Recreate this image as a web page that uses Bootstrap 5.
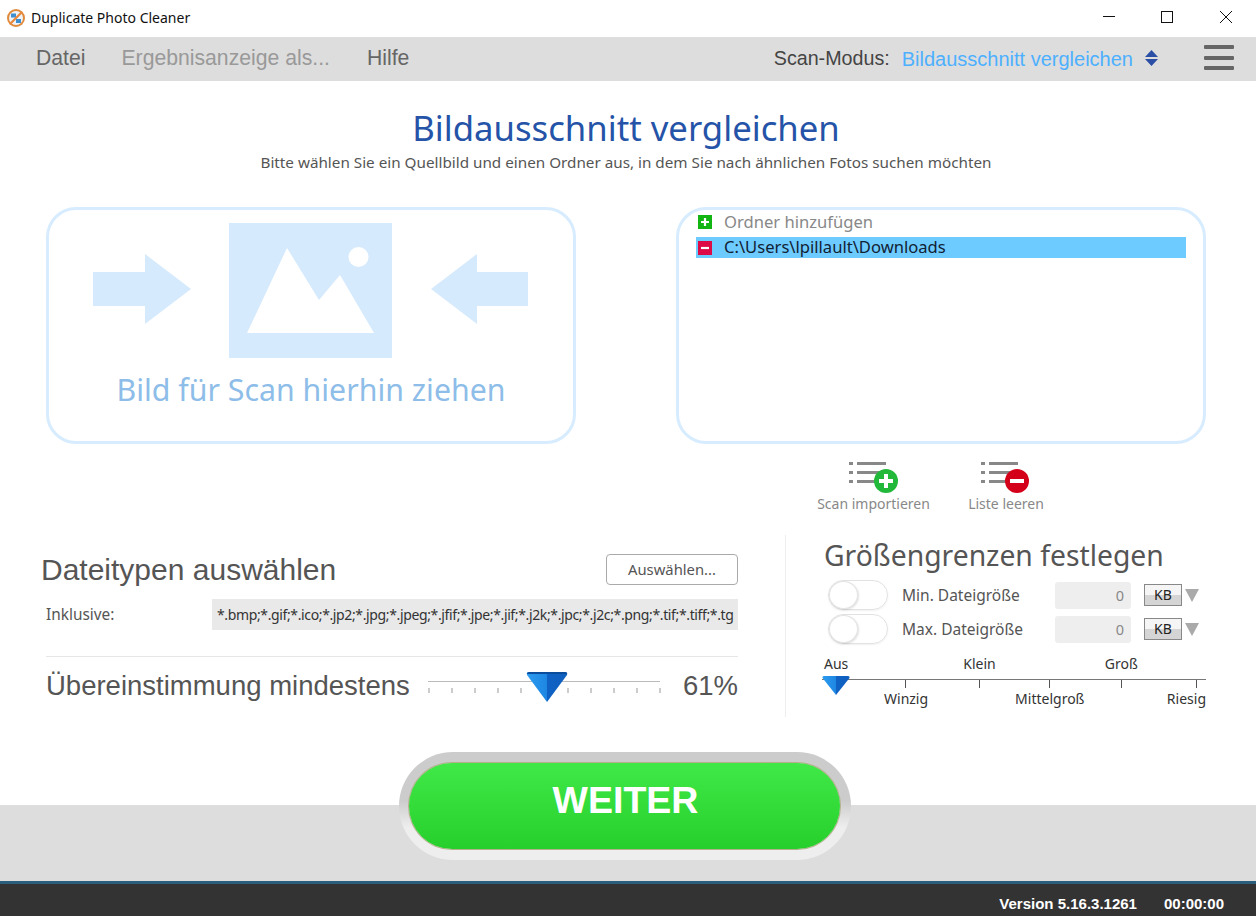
<!DOCTYPE html>
<html lang="de">
<head>
<meta charset="utf-8">
<title>Duplicate Photo Cleaner</title>
<link rel="stylesheet" href="https://cdn.jsdelivr.net/npm/bootstrap@5.3.0/dist/css/bootstrap.min.css">
<style>
html,body{height:100%;overflow:hidden}
body{width:1256px;height:916px;font-family:"Noto Sans","Open Sans",sans-serif;background:#fff;color:#555}
.arial{font-family:"Liberation Sans",Arial,sans-serif}
.titlebar{height:37px;font-size:14px;color:#111;padding-left:7px;padding-bottom:2px}
.titlebar .ttl{margin-left:6px;font-family:"Noto Sans",sans-serif;font-size:14px}
.winbtns{width:153px;height:37px;margin-top:2px}
.menubar{height:44px;background:#ddd;padding:0 22px 3px 36px;font-size:21.2px}
.mi{color:#666;margin-right:36px}
.mi-off{color:#999;margin-right:37px}
.scan-lbl{color:#444;font-size:19.7px;margin-right:12px;margin-top:3px}
.scan-val{color:#4db0ff;font-size:20px;margin-right:12px;margin-top:3px}
.burger{width:30px;margin-left:46px}
.burger i{display:block;height:4px;background:#666;border-radius:1px;margin:6.5px 0}
.heading{height:126px;padding:26px 4px 0 0;text-align:center}
.heading h1{font-size:34.700px;font-weight:400;color:#2453a8;margin:0;line-height:42px;font-family:"Noto Sans",sans-serif}
.heading p{font-size:15.250px;margin:3px 0 0;color:#555;line-height:20px}
.panels{padding:0 50px 0 46px}
.panel{width:530px;height:237px;border:3.5px solid #d8ecff;border-radius:30px}
.drop{padding-top:13px}
.drop-text{font-size:30.300px;color:#8dbde8;line-height:40px;margin-top:12px}
.list{padding:2px 17px 0 17px;font-size:16.600px;line-height:21px}
.list-add{color:#888;padding:0 0 2px 2px;margin-bottom:4px;height:21px}
.list-sel{background:#6dcbff;color:#123;padding:0 0 2px 2px;height:21px}
.sq{width:14px;height:14px;margin-right:12px;flex:none}
.list-sel .sq{margin-top:2px}
.actions{height:91px;padding:18px 0 0 817px;font-size:14px;color:#888}
.act{line-height:20px;text-align:center}
.act svg{display:block;margin:0 auto}
.act-a{width:113px;margin-right:38px}
.act-b{width:76px}
.lower{height:182px}
.lpane{width:785px;padding:0 47px 0 46px}
.rpane{width:471px;border-left:1px solid #eee;padding:0 50px 0 38px}
.l-title{font-size:30px;color:#555;line-height:36px;margin-left:-5px}
.l-head{height:64px;padding-top:17px}
.pick{width:132px;height:31px;border:1px solid #aaa;border-radius:4px;background:#fff;font-size:14.800px;color:#555;padding:0;margin-top:2px}
.incl{font-size:15.400px;color:#555;height:31px}
.incl-field{width:526px;height:31px;background:#e9e9e9;font-size:14px;color:#333;padding-left:5px;white-space:nowrap;line-height:31px;letter-spacing:-.37px}
.l-rule{border:0;border-top:1px solid #e6e6e6;opacity:1;margin:26px 0 0}
.match{height:58px;font-size:27.500px;color:#555}
.match-val{margin-left:auto}
.match svg{margin:2px 0 0 18px}
.r-title{font-size:28.300px;font-weight:400;color:#555;line-height:36px;margin:2px 0 5px;font-family:"Noto Sans",sans-serif}
.sz{height:34px;font-size:15.500px}
.tog{width:60px;height:30px;border:1px solid #e2e2e2;border-radius:15px;margin:0 14px 0 4px;flex:none;box-shadow:0 1px 2px rgba(0,0,0,.06)}
.tog i{display:block;width:29px;height:28px;border-radius:50%;background:#fff;border:1px solid #e4e4e4;box-shadow:1px 1px 2px rgba(0,0,0,.12)}
.sz-lbl{width:153px;color:#555;margin-top:2px}
.sz-in{width:76px;height:27px;background:#eee;border-radius:3px;text-align:right;padding-right:7px;line-height:27px;color:#888;font-size:14.500px;margin-right:13px}
.kb{width:38px;height:22px;border:1px solid #888;background:linear-gradient(#f5f5f5 50%,#d5d5d5 50%);text-align:center;line-height:20px;font-size:14px;color:#222}
.tri{width:0;height:0;border-left:7.5px solid transparent;border-right:7.5px solid transparent;border-top:13px solid #aaa;margin-left:3px}
.scale{font-size:14px;color:#333;line-height:18px;margin-top:9px;margin-left:-2px;width:384px}
.scale svg{display:block;margin-top:3px}
.t-row{padding-left:2px}
.t-klein{margin-left:115px}
.t-gross{margin-left:109px}
.b-row{padding-left:62px;margin-top:-6px}
.b-mittel{margin-left:87px}
.b-riesig{margin-left:auto}
.band{height:76px;background:#ddd;margin-top:88px;display:flex;justify-content:center;padding-right:6px}
.go-ring{width:452px;height:108px;margin-top:-53px;border-radius:54px;background:linear-gradient(#ccc 0%,#ccc 45%,#eee 70%,#eee 100%);padding:11px 11px 11px 10px;flex:none}
.go{display:block;width:100%;height:86px;border:0;border-radius:44px;background:linear-gradient(#40e947,#26cf2b);box-shadow:0 0 0 1px #b5b08c;color:#fff;font-weight:700;font-size:37.500px;line-height:1;padding:0 0 10px 2px}
.status{height:35px;background:#333;border-top:3px solid #2b5d7c;color:#fff;font-size:15px;font-weight:700;padding:9px 32px 0 0}
.status span+span{margin-left:27px}
</style>
</head>
<body>
<div class="titlebar d-flex align-items-center">
  <svg width="18" height="18" viewBox="0 0 18 18"><circle cx="9" cy="9" r="9" fill="#e08a3c"/><circle cx="9" cy="9" r="7" fill="#eef4fa"/><path d="M4 4.500h5v4H4z" fill="#3d8fd0"/><path d="M9 10h5v4H9z" fill="#3d8fd0"/><path d="M3 15 15 3" stroke="#e8873a" stroke-width="2.200"/></svg>
  <span class="ttl">Duplicate Photo Cleaner</span>
  <div class="winbtns ms-auto">
    <svg width="153" height="37" viewBox="1 0 153 37"><path d="M1 16.500h12" stroke="#111"/><rect x="59.500" y="11.500" width="11" height="11" fill="none" stroke="#111"/><path d="M118 11l12 12M130 11l-12 12" stroke="#111"/></svg>
  </div>
</div>
<nav class="menubar d-flex align-items-center arial">
  <span class="mi">Datei</span><span class="mi mi-off">Ergebnisanzeige als...</span><span class="mi">Hilfe</span>
  <span class="scan-lbl ms-auto">Scan-Modus:</span><span class="scan-val">Bildausschnitt vergleichen</span>
  <svg width="13" height="18" viewBox="0 0 13 18"><path d="M6.500 1 13 8H0zM0 10h13l-6.500 7z" fill="#2a4fa5"/></svg>
  <div class="burger"><i></i><i></i><i></i></div>
</nav>
<main>
  <header class="heading">
    <h1>Bildausschnitt vergleichen</h1>
    <p>Bitte wählen Sie ein Quellbild und einen Ordner aus, in dem Sie nach ähnlichen Fotos suchen möchten</p>
  </header>
  <section class="panels d-flex justify-content-between">
    <div class="panel drop text-center">
      <svg width="437" height="135" viewBox="1 0 437 135" class="d-block mx-auto">
        <path d="M1 49h52V31l46 35-46 35V83H1z" fill="#d6eafd"/>
        <rect x="137" y="0" width="163" height="135" fill="#d6eafd"/>
        <path d="M155 110 195 25l32 52 21-25 34 58z" fill="#fff"/>
        <circle cx="266.500" cy="34" r="10" fill="#fff"/>
        <path d="M436 49h-51V31l-46 35 46 35V83h51z" fill="#d6eafd"/>
      </svg>
      <div class="drop-text">Bild für Scan hierhin ziehen</div>
    </div>
    <div class="panel list">
      <div class="list-add d-flex align-items-center">
        <svg class="sq" viewBox="0 0 14 14"><rect width="14" height="14" fill="#12b512"/><path d="M3 7h8M7 3v8" stroke="#fff" stroke-width="2.200"/></svg>Ordner hinzufügen
      </div>
      <div class="list-sel d-flex align-items-center">
        <svg class="sq" viewBox="0 0 14 14"><rect width="14" height="14" fill="#dc0a46"/><path d="M3 7h8" stroke="#fff" stroke-width="2.200"/></svg>C:\Users\lpillault\Downloads
      </div>
    </div>
  </section>
  <section class="actions d-flex align-items-start">
    <div class="act act-a">
      <svg width="50" height="32" viewBox="0 0 50 32">
        <g fill="#888"><rect x="0" y="0" width="4" height="3"/><rect x="8" y="0" width="29" height="3"/><rect x="0" y="9" width="4" height="3"/><rect x="8" y="9" width="29" height="3"/><rect x="0" y="18" width="4" height="3"/><rect x="8" y="18" width="20" height="3"/></g>
        <circle cx="37" cy="19" r="12" fill="#22b83a"/><path d="M30 19h14M37 12v14" stroke="#fff" stroke-width="4"/>
      </svg>
      Scan importieren
    </div>
    <div class="act act-b">
      <svg width="50" height="32" viewBox="0 0 50 32">
        <g fill="#888"><rect x="0" y="0" width="4" height="3"/><rect x="8" y="0" width="29" height="3"/><rect x="0" y="9" width="4" height="3"/><rect x="8" y="9" width="29" height="3"/><rect x="0" y="18" width="4" height="3"/><rect x="8" y="18" width="20" height="3"/></g>
        <circle cx="36" cy="19" r="12" fill="#d4001a"/><path d="M29 19h14" stroke="#fff" stroke-width="4"/>
      </svg>
      Liste leeren
    </div>
  </section>
  <section class="lower d-flex">
    <div class="lpane">
      <div class="l-head d-flex justify-content-between align-items-start">
        <div class="l-title arial">Dateitypen auswählen</div>
        <button type="button" class="pick">Auswählen...</button>
      </div>
      <div class="incl d-flex align-items-center justify-content-between">
        <span>Inklusive:</span>
        <div class="incl-field">*.bmp;*.gif;*.ico;*.jp2;*.jpg;*.jpeg;*.jfif;*.jpe;*.jif;*.j2k;*.jpc;*.j2c;*.png;*.tif;*.tiff;*.tg</div>
      </div>
      <hr class="l-rule">
      <div class="match d-flex align-items-center arial">
        <span>Übereinstimmung mindestens</span>
        <svg width="233" height="32" viewBox="0 0 233 32">
          <defs><linearGradient id="th" x1="0" x2="1" y1="0" y2="0"><stop offset="0" stop-color="#2b9cf0"/><stop offset=".5" stop-color="#1e86e2"/><stop offset=".5" stop-color="#0f62c4"/><stop offset="1" stop-color="#0f5fbe"/></linearGradient></defs>
          <path d="M0 10.500h232" stroke="#bbb" stroke-width="1"/>
          <path d="M1 17v5M24 17v5M47 17v5M70 17v5M93 17v5M140 17v5M163 17v5M186 17v5M209 17v5M232 17v5" stroke="#999"/>
          <path d="M101 1h36q3 0 2 3l-20 27-20-27q-1-3 2-3z" fill="url(#th)"/><path d="M101 1h36q2 0 2 2H99q0-2 2-2z" fill="#0a4d9c"/>
        </svg>
        <span class="match-val">61%</span>
      </div>
    </div>
    <div class="rpane">
      <h2 class="r-title">Größengrenzen festlegen</h2>
      <div class="sz d-flex align-items-center">
        <div class="tog"><i></i></div><span class="sz-lbl">Min. Dateigröße</span><div class="sz-in">0</div><div class="kb">KB</div><div class="tri"></div>
      </div>
      <div class="sz d-flex align-items-center">
        <div class="tog"><i></i></div><span class="sz-lbl">Max. Dateigröße</span><div class="sz-in">0</div><div class="kb">KB</div><div class="tri"></div>
      </div>
      <div class="scale">
        <div class="t-row d-flex"><span>Aus</span><span class="t-klein">Klein</span><span class="t-gross">Groß</span></div>
        <svg width="384" height="20" viewBox="0 0 384 20">
          <defs><linearGradient id="th2" x1="0" x2="1" y1="0" y2="0"><stop offset="0" stop-color="#2b9cf0"/><stop offset=".5" stop-color="#1e86e2"/><stop offset=".5" stop-color="#0f62c4"/><stop offset="1" stop-color="#0f5fbe"/></linearGradient></defs>
          <path d="M0 3.500h384" stroke="#777"/>
          <path d="M83.500 4v8M157.500 4v8M227.500 4v8M299.500 4v8M374.500 4v8" stroke="#555"/>
          <path d="M2 0h24q2 0 1.500 2L14 19 .5 2Q0 0 2 0z" fill="url(#th2)"/>
        </svg>
        <div class="b-row d-flex"><span>Winzig</span><span class="b-mittel">Mittelgroß</span><span class="b-riesig">Riesig</span></div>
      </div>
    </div>
  </section>
  <div class="band">
    <div class="go-ring"><button type="button" class="go arial">WEITER</button></div>
  </div>
</main>
<footer class="status d-flex align-items-center justify-content-end arial">
  <span>Version 5.16.3.1261</span><span>00:00:00</span>
</footer>
<script src="https://cdn.jsdelivr.net/npm/bootstrap@5.3.0/dist/js/bootstrap.bundle.min.js"></script>
</body>
</html>
